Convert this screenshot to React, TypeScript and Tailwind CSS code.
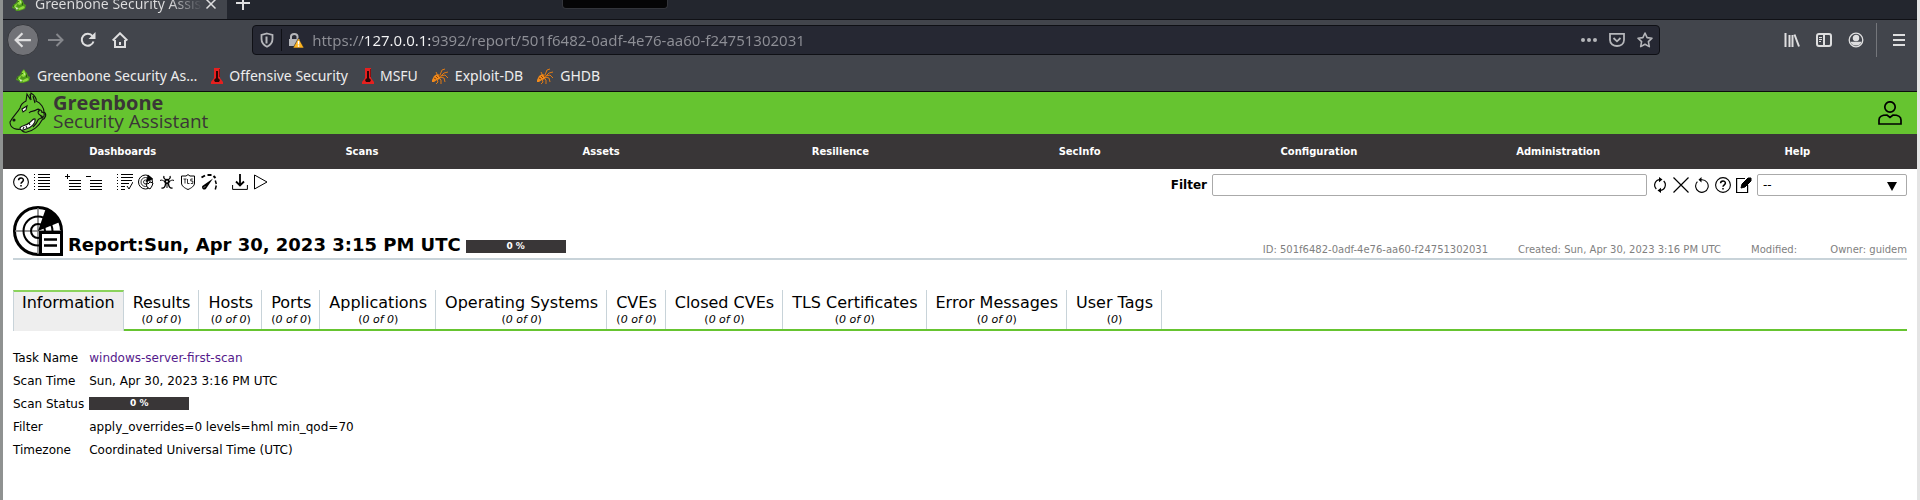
import type { ReactNode } from 'react';

const chrome = "font-['Noto_Sans','Open_Sans',sans-serif]";

function Svg({ children, className = 'size-4', box = '0 0 16 16', width = 1 }: { children: ReactNode; className?: string; box?: string; width?: number }) {
  return (
    <svg aria-hidden="true" viewBox={box} className={`${className} shrink-0`} fill="none" stroke="currentColor" strokeWidth={width}>
      {children}
    </svg>
  );
}

function IconButton({ label, children, className = 'size-4' }: { label: string; children: ReactNode; className?: string }) {
  return (
    <button type="button" aria-label={label} className={`flex shrink-0 items-center justify-center ${className}`}>
      {children}
    </button>
  );
}

function DragonIcon() {
  return (
    <Svg className="size-4" width={0}>
      <path fill="#4f9a1c" d="M7 3l2-2 1 2 2 2 1 3 2 1-1 4-3 1-3 1H5l-1-2-3-1 1-3 3-2z" />
      <path fill="#8fdc3c" d="M7 4l2-2 1 2 1 3-2 2-3-1-1 3 3 1 4-2 2 1-2 2-4 1-1-2-4-1 1-2 3-2z" />
      <path fill="#e6f3d8" d="M4 11l3 1-1 2zM9 6l1-1v2z" />
      <path fill="#1f4a0a" d="M6 6l2-1v1zM2 9l1 1-1 1zM11 6l1 2-1 2z" />
    </Svg>
  );
}

function ThermometerIcon() {
  return (
    <Svg className="h-4 w-3" box="0 0 12 16" width={0}>
      <path fill="#e5201f" d="M3 0h6v10l3 4v2H0v-2l3-4z" />
      <path fill="#2a0606" d="M5 3h2v7l2 2-1 2H4l-1-2 2-2z" />
      <path fill="#8e0d0d" d="M8 1h1v8H8z" />
    </Svg>
  );
}

function BugIcon() {
  return (
    <Svg className="h-4 w-[17px]" box="0 0 17 16">
      <path fill="#f08a1c" stroke="none" d="M0 12l2-4 3-2 3 1 1 2-1 2-3 1-3 2-2 0z" />
      <path stroke="#e07b14" d="M8 7l2-5 3-1M9 8l3-3 4-1M9 8l4-1 3 3M8 9l4 1 1 4M7 10l2 2v4M5 11l1 3-2 2M5 6L4 4" />
      <path stroke="#8a4208" d="M2 10l2 1M4 8l2 2M7 7l1 2" />
    </Svg>
  );
}

function HelpIcon() {
  return (
    <Svg>
      <circle cx="8" cy="8" r="7.4" strokeWidth="1.1" />
      <path strokeWidth="1.5" d="M5.6 6.3c0-3 4.8-3 4.8-.2 0 1.700-2.400 1.700-2.400 3.700M8 10.900v1.600" />
    </Svg>
  );
}

const toolGroups: { label: string; icon: ReactNode }[][] = [
  [
    { label: 'Help: Reports', icon: <HelpIcon /> },
    {
      label: 'Reports List',
      icon: <Svg><path d="M4 .5h12M4 3.500h12M4 6.500h12M4 9.500h12M4 12.500h12M4 15.500h12" /><path strokeDasharray="1 2" d="M.5 0v16" /></Svg>,
    },
  ],
  [
    { label: 'Add to Assets', icon: <Svg><path d="M0 2.500h5M2.500 0v5M4 6.500h12M4 9.500h12M4 12.500h12M4 15.500h12" /></Svg> },
    { label: 'Remove from Assets', icon: <Svg><path d="M0 2.500h5M4 6.500h12M4 9.500h12M4 12.500h12M4 15.500h12" /></Svg> },
  ],
  [
    {
      label: 'Corresponding Task',
      icon: <Svg><path d="M4 .5h12M4 3.500h12M4 6.500h11M4 9.500h8M4 12.500h4M4 15.500h4" /><path strokeDasharray="1 2" d="M.5 0v16" /><path d="M10 12l2 3 4-7" /></Svg>,
    },
    {
      label: 'Corresponding Results',
      icon: (
        <Svg>
          <circle cx="7.500" cy="8" r="7" /><circle cx="7.500" cy="8" r="4.500" strokeWidth=".8" /><circle cx="7.500" cy="8" r="2" strokeWidth=".8" />
          <path fill="currentColor" strokeWidth=".5" d="M8 8l2-7 5 4z" /><path d="M8 9l2 1 2-2 3 1-1 3-2 3-3-2z" fill="white" />
        </Svg>
      ),
    },
    {
      label: 'Corresponding Vulnerabilities',
      icon: (
        <Svg>
          <circle cx="8" cy="7.500" r="1.800" strokeWidth="1.800" />
          <path strokeWidth="1.300" d="M5 2c-1 2 1 3.700 3 3.700s4-1.700 3-3.700M2.500 14c2.500.5 4-1.500 4-4.500M13.500 14c-2.500.5-4-1.500-4-4.500" />
          <path d="M1 6.500c1.500-1 3.500 0 5 1.500M15 6.500c-1.500-1-3.500 0-5 1.500M8 9v5" />
        </Svg>
      ),
    },
    {
      label: 'Corresponding TLS Certificates',
      icon: (
        <Svg>
          <path d="M8 .6l2 1.400h4.500v7c0 3-3 5-6.500 6.500C4.500 14 1.500 12 1.500 9V2H6z" />
          <path strokeWidth=".8" d="M3.500 5h3M5 5v4.500M7.500 5v4.500h2M12.800 5h-2v2h2v2.500h-2" />
        </Svg>
      ),
    },
    {
      label: 'Corresponding Performance',
      icon: (
        <Svg>
          <path strokeWidth="2" d="M.5 3.500L4 1.500M6.500 1h4M12.500 2l2 2" />
          <path strokeWidth="1.500" d="M14.300 6.500l1 3.500M15.300 11.500l-1 4" />
          <path fill="currentColor" stroke="none" d="M12 4.500L5.500 14C4 17 0 15 1.300 12z" />
          <path stroke="white" d="M3 13.500l1-1" />
        </Svg>
      ),
    },
  ],
  [
    { label: 'Download filtered Report', icon: <Svg><path d="M.6 11v4.400h14.800V11" /><path strokeWidth="1.800" d="M8 0v11M4 7.500l4 4 4-4" /></Svg> },
    { label: 'Trigger Alert', icon: <Svg><path d="M1.500 1v14L14 8z" /></Svg> },
  ],
];

const filterTools: { label: string; icon: ReactNode }[] = [
  {
    label: 'Update Filter',
    icon: <Svg><path strokeWidth="1.200" d="M8 2.600A5.500 5.500 0 004.300 12M8 13.400A5.500 5.500 0 0011.700 4" /><path fill="currentColor" stroke="none" d="M7 0l3.500 2.600L7 5.200zM9 10.800l-3.500 2.600L9 16z" /></Svg>,
  },
  { label: 'Remove Filter Settings', icon: <Svg><path strokeWidth="1.200" d="M.5.500l15 15M15.500.500l-15 15" /></Svg> },
  {
    label: 'Reset to Default Filter',
    icon: <Svg><path strokeWidth="1.100" d="M3.400 4.600A6.300 6.300 0 108 2.700H6" /><path fill="currentColor" stroke="none" d="M7.500 0L4.500 2.700l3 2.700z" /></Svg>,
  },
  { label: 'Help: Powerfilter', icon: <HelpIcon /> },
  {
    label: 'Edit Filter',
    icon: <Svg><path strokeWidth="1.200" d="M9 1.500H.6v14h11V8" /><path fill="currentColor" d="M5 11l1-4 6-6h3v3L9 10z" /></Svg>,
  },
];

const bookmarks = [
  { name: 'Greenbone Security As…', icon: <DragonIcon /> },
  { name: 'Offensive Security', icon: <ThermometerIcon /> },
  { name: 'MSFU', icon: <ThermometerIcon /> },
  { name: 'Exploit-DB', icon: <BugIcon /> },
  { name: 'GHDB', icon: <BugIcon /> },
];

const menu = ['Dashboards', 'Scans', 'Assets', 'Resilience', 'SecInfo', 'Configuration', 'Administration', 'Help'];

const tabs = [
  ['Results', '0 of 0'],
  ['Hosts', '0 of 0'],
  ['Ports', '0 of 0'],
  ['Applications', '0 of 0'],
  ['Operating Systems', '0 of 0'],
  ['CVEs', '0 of 0'],
  ['Closed CVEs', '0 of 0'],
  ['TLS Certificates', '0 of 0'],
  ['Error Messages', '0 of 0'],
  ['User Tags', '0'],
];

function Progress() {
  return (
    <div role="progressbar" aria-label="Scan progress" aria-valuenow={0} className="flex h-[13px] w-[100px] shrink-0 items-center justify-center bg-[#393637] text-[9px] leading-none font-bold text-white">
      0 %
    </div>
  );
}

function Browser() {
  return (
    <header className={`border-b border-[#0c0c0d] bg-[#42454c] text-[#dededf] ${chrome}`}>
      <div className="relative flex h-5 items-start overflow-hidden border-b border-[#101116] bg-[#23262e]">
        <div className="-mt-[11px] flex h-[30px] w-56 shrink-0 items-center bg-[#42454c] pr-2 pl-2">
          <DragonIcon />
          <span className="ml-2 flex-1 overflow-hidden bg-linear-to-r from-[#dededf] from-80% to-[#42454c] bg-clip-text text-sm leading-6 whitespace-nowrap text-transparent">
            Greenbone Security Assistant
          </span>
          <IconButton label="Close tab" className="size-4">
            <Svg className="size-3" width={2}><path d="M2 2l12 12M14 2L2 14" /></Svg>
          </IconButton>
        </div>
        <IconButton label="New tab" className="-mt-[5px] ml-2 size-4">
          <Svg className="size-4" width={2}><path d="M8 1v14M1 8h14" /></Svg>
        </IconButton>
        <div className="absolute top-0 left-[559px] h-[9px] w-[106px] rounded-b border border-t-0 border-[#33353b] bg-[#050506]" />
      </div>

      <div className="flex h-10 items-center pr-2 pl-1">
        <div className="flex">
          <IconButton label="Back" className="size-8 rounded-full border border-[#37393e] bg-[#717277]">
            <Svg className="size-[18px]" width={2}><path d="M15 8H2M7.500 2L1.500 8l6 6" /></Svg>
          </IconButton>
          <IconButton label="Forward" className="ml-px size-8 text-[#85878c]">
            <Svg className="size-4" width={2}><path d="M0 8h14M8.500 2l6 6-6 6" /></Svg>
          </IconButton>
          <IconButton label="Reload" className="size-8">
            <Svg className="size-4" width={2}><path d="M13.500 9.500A6 6 0 1112.500 4" /><path fill="currentColor" stroke="none" d="M15.500 0v7h-7z" /></Svg>
          </IconButton>
          <IconButton label="Home" className="size-8">
            <Svg className="size-4" width={2}><path d="M.7 8.500L8 1.300l7.300 7.200M3 8v7h10V8M8 10v3" /></Svg>
          </IconButton>
        </div>
        <div className="flex-1" />
        <div className="flex h-[30px] flex-[12] items-center rounded border border-[#0f1015] bg-[#262833] px-1.5 text-[#b5b6ba]">
          <Svg className="size-4" width={1.8}><path d="M8 1.500L13.500 3v4c0 4-2 6-5.500 7.800C4.500 13 2.500 11 2.500 7V3z" /><path strokeWidth="2" d="M7.500 4.500v7" /></Svg>
          <div className="mx-1.5 h-[22px] w-px bg-[#0f1015]" />
          <Svg className="size-4" width={0}>
            <path fill="#b5b6ba" d="M1 7h11v7H1z" />
            <path stroke="#b5b6ba" strokeWidth="2" d="M3 8V4.500C3 1 9.500 1 9.500 4.500V8" />
            <path fill="#ffb41f" stroke="#262833" strokeWidth=".6" d="M10.500 6l5.500 10H5z" />
            <path fill="white" d="M9.800 9h1.500v3.500H9.800zM9.800 13.300h1.500v1.500H9.800z" />
          </Svg>
          <input
            type="text"
            aria-label="Address"
            defaultValue="https://127.0.0.1:9392/report/501f6482-0adf-4e76-aa60-f24751302031"
            className="ml-2 h-6 min-w-0 flex-1 bg-[linear-gradient(90deg,#8e8f96_50px,#f5f5f6_50px,#f5f5f6_119px,#8e8f96_119px)] bg-clip-text text-[15px] leading-6 text-transparent outline-none"
          />
          <div className="flex items-center gap-3">
            <IconButton label="Page actions"><Svg width={0}><g fill="currentColor"><circle cx="2" cy="8" r="2" /><circle cx="8" cy="8" r="2" /><circle cx="14" cy="8" r="2" /></g></Svg></IconButton>
            <IconButton label="Save to Pocket"><Svg width={1.8}><path d="M1 1.800h14V8c0 8-14 8-14 0zM4.500 6L8 9.300 11.500 6" /></Svg></IconButton>
            <IconButton label="Bookmark this page"><Svg width={1.6}><path strokeLinejoin="round" d="M8 1l2.100 4.600 4.900.600-3.600 3.400.900 5L8 12.200l-4.300 2.400.9-5L1 6.200l4.900-.6z" /></Svg></IconButton>
          </div>
        </div>
        <div className="flex-1" />
        <IconButton label="Library" className="size-8"><Svg width={2}><path d="M1.500 1v14M5.500 3v12M8.500 3v12M10.500 2.500L15 14.500" /></Svg></IconButton>
        <IconButton label="Sidebars" className="size-8"><Svg width={2}><rect x="1" y="2" width="14" height="12" rx="2" /><path d="M8 2v12" /><path strokeWidth="1" d="M3 5.500h3M3 7.500h3M3 9.500h2" /></Svg></IconButton>
        <IconButton label="Account" className="size-8"><Svg width={1.3}><circle cx="8" cy="8" r="6.800" /><circle cx="8" cy="6" r="2.600" fill="currentColor" /><path fill="currentColor" d="M3.500 10.500h9C11 13.500 5 13.500 3.500 10.500z" /></Svg></IconButton>
        <div className="mx-1 h-[34px] w-px bg-[#74767b]" />
        <IconButton label="Open menu" className="ml-2 size-5"><Svg width={2}><path d="M2 3h12M2 8h12M2 13h12" /></Svg></IconButton>
      </div>

      <nav aria-label="Bookmarks" className="flex h-[31px] items-center gap-[14px] pl-3 text-sm leading-5 text-[#ededee]">
        {bookmarks.map((b) => (
          <a key={b.name} href="#" className="flex items-center gap-1.5 whitespace-nowrap">
            {b.icon}
            {b.name}
          </a>
        ))}
      </nav>
    </header>
  );
}

function Logo() {
  return (
    <a href="#" aria-label="Greenbone Security Assistant" className="flex items-start gap-1 text-[#3a3637]">
      <svg aria-hidden="true" viewBox="0 0 40 42" className="h-[42px] w-10" fill="none" stroke="#111" strokeWidth="1.100">
        <path d="M17 9l1-7 3 5 1-6c4 2 6 7 5 8 5 2 8 7 8 11 3 2 2 6-2 8-3 6-9 11-15 12-4 1-6-2-5-3-5 1-12 0-12-7 3-6 8-10 10-14 1-4 4-6 6-7z" />
        <path fill="white" stroke="#111" d="M11 36c1-3 6-2 9-5 2-1 4-5 6-4 1 4-4 9-9 10-4 2-6 1-6-1z" />
        <path fill="white" stroke="#111" d="M13 17l5-3-1 4-3 2z" />
        <path d="M14 37l1-2M18 36l-1-2M21 33l-1-2M21 2l1 6M24 4l2 7M20 21c2-3 5-1 7-3 3-2 5 0 2 2 0 4 3 2 4 5-1 2-3 1-4 3-1 3-3 5-5 7M29 18c3-1 4 1 4 3M33 20c3 0 3 5 0 6M31 24c2-1 3 1 2 3" />
        <circle cx="5" cy="28" r="1" fill="#111" />
      </svg>
      <span className="flex flex-col pt-px font-['Open_Sans','Noto_Sans',sans-serif]">
        <span className="text-xl leading-[19px] font-bold">Greenbone</span>
        <span className="text-[19px] leading-[19px]">Security Assistant</span>
      </span>
    </a>
  );
}

export default function App() {
  return (
    <div className="min-h-screen border-r-[3px] border-l-[3px] border-r-[#e4e4e4] border-l-[#8f9291] bg-white font-['DejaVu_Sans',sans-serif] text-xs text-black">
      <Browser />
      <div className="flex h-[42px] items-center justify-between bg-[#66c430] pr-[15px] pl-[6px]">
        <Logo />
        <IconButton label="User" className="size-6">
          <Svg className="size-6" box="0 0 24 24" width={1.7}>
            <circle cx="12" cy="6" r="5.200" />
            <path d="M1 23v-4c0-4 4-5 8-5l3 2.500 3-2.500c4 0 8 1 8 5v4z" />
          </Svg>
        </IconButton>
      </div>
      <nav aria-label="Main" className="flex h-[35px] items-center bg-[#393637] text-[10px] font-bold text-white">
        {menu.map((m) => (
          <a key={m} href="#" className="flex-1 text-center">{m}</a>
        ))}
      </nav>

      <main className="px-[10px] pt-[5px]">
        <div className="flex items-start justify-between">
          <div className="flex gap-[15px]">
            {toolGroups.map((group, i) => (
              <div key={i} className="flex gap-[5px]">
                {group.map((t) => (
                  <IconButton key={t.label} label={t.label}>{t.icon}</IconButton>
                ))}
              </div>
            ))}
          </div>
          <form className="flex items-center gap-[5px]">
            <label htmlFor="filter" className="font-bold">Filter</label>
            <input id="filter" type="text" className="h-[22px] w-[435px] rounded-xs border border-[#aaa] bg-white px-2" />
            {filterTools.map((t) => (
              <IconButton key={t.label} label={t.label}>{t.icon}</IconButton>
            ))}
            <div className="relative">
              <select aria-label="Saved filter" className="block h-[22px] w-[150px] appearance-none rounded-xs border border-[#aaa] bg-white px-[5px] text-xs">
                <option>--</option>
              </select>
              <Svg className="pointer-events-none absolute top-2 right-[10px] h-[9px] w-[10px]" box="0 0 10 9" width={0}><path fill="black" d="M0 0h10L5 9z" /></Svg>
            </div>
          </form>
        </div>

        <div className="mt-[10px] flex items-end justify-between border-b-2 border-[#c8d3d9]">
          <div className="flex items-end pb-[2px]">
            <svg aria-hidden="true" viewBox="0 0 50 50" className="size-[50px]" fill="none" stroke="black">
              <circle cx="25" cy="25" r="23.500" strokeWidth="3" />
              <path stroke="#777" strokeWidth="1.500" d="M25 2v46M2 25h46" />
              <circle cx="25" cy="25" r="14.500" strokeWidth="2" />
              <circle cx="25" cy="25" r="7" strokeWidth="2" />
              <path fill="black" stroke="none" d="M25 25l8-23c7 3 12 8 14 14z" />
              <path fill="white" strokeWidth="3" d="M27.500 26.500h21v22h-21z" />
              <path strokeWidth="2.500" d="M31 33.500h13M31 39.500h13" />
            </svg>
            <h1 className="ml-[5px] text-lg leading-[22px] font-bold whitespace-nowrap">Report:Sun, Apr 30, 2023 3:15 PM UTC</h1>
            <div className="ml-[5px] pb-[3px]"><Progress /></div>
          </div>
          <div className="flex gap-[30px] text-[10px] leading-4 whitespace-pre text-[#7f7f7f]">
            <span>ID: 501f6482-0adf-4e76-aa60-f24751302031</span>
            <span>Created: Sun, Apr 30, 2023 3:16 PM UTC</span>
            <span>{'Modified: '}</span>
            <span>Owner: guidem</span>
          </div>
        </div>

        <div role="tablist" className="mt-[30px] flex h-[41px] text-base leading-5">
          <button type="button" role="tab" aria-selected="true" className="flex items-start border-t-2 border-r border-l border-t-[#8bd35c] border-r-[#c8d3d9] border-l-[#c8d3d9] bg-[#eee] px-2 pt-[1px]">
            Information
          </button>
          <div className="flex flex-1 border-b-2 border-[#66c430]">
            {tabs.map(([name, count]) => (
              <button key={name} type="button" role="tab" aria-selected="false" className="flex flex-col items-center border-r border-[#c8d3d9] pt-[3px] pr-2 pl-[9px] whitespace-nowrap">
                {name}
                <span className="text-[11px] leading-[14px]">(<i>{count}</i>)</span>
              </button>
            ))}
          </div>
        </div>

        <table className="mt-[15px] text-left">
          <tbody>
            {[
              ['Task Name', <a href="#" className="text-[#551a8b]">windows-server-first-scan</a>],
              ['Scan Time', 'Sun, Apr 30, 2023 3:16 PM UTC'],
              ['Scan Status', <Progress />],
              ['Filter', 'apply_overrides=0 levels=hml min_qod=70'],
              ['Timezone', 'Coordinated Universal Time (UTC)'],
            ].map(([label, value], i) => (
              <tr key={i} className="h-[23px]">
                <th scope="row" className="p-0 pr-[5px] font-normal">{label}</th>
                <td className="p-0">{value}</td>
              </tr>
            ))}
          </tbody>
        </table>
      </main>
    </div>
  );
}
